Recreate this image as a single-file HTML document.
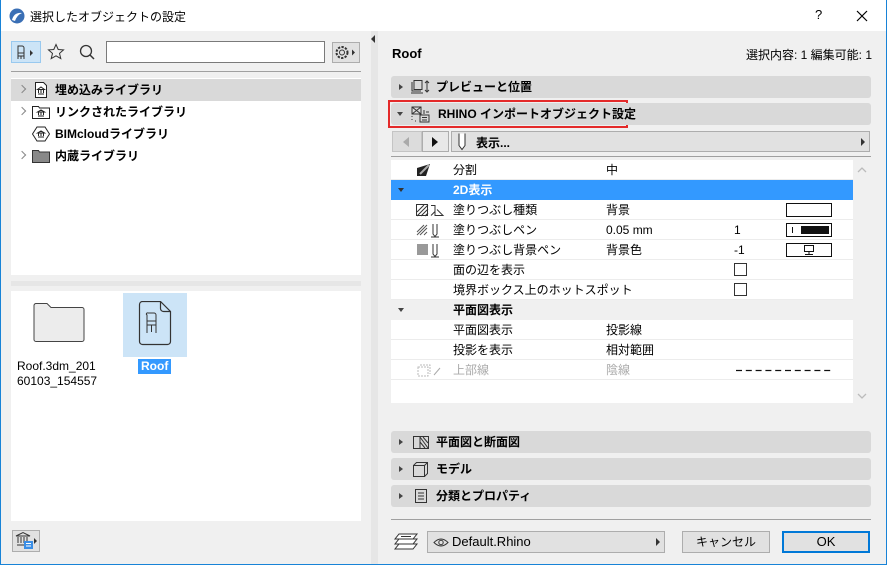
<!DOCTYPE html>
<html><head><meta charset="utf-8"><style>
*{box-sizing:border-box;margin:0;padding:0}
body{width:887px;height:565px;overflow:hidden;background:#f0f0f0;font-family:"Liberation Sans","Noto Sans CJK JP",sans-serif;font-size:12px;color:#000;position:relative}
.a{position:absolute}
.win{position:absolute;left:0;top:0;width:887px;height:565px;border:1px solid #1883d7;border-top:none}
.tb{left:0;top:0;width:887px;height:31px;background:#fff}
.row{position:absolute;left:0;height:22px;width:350px;font-weight:bold;line-height:22px}
.pan{position:absolute;left:391px;width:480px;height:22px;background:#d9d9d9;border-radius:3px;font-weight:bold;line-height:22px}
.tr{position:absolute;left:0;width:462px;height:20px;line-height:20px;border-bottom:1px solid #ececec}
.tri{position:absolute;left:8px;top:8px;width:0;height:0;border-left:4px solid #444;border-top:3.5px solid transparent;border-bottom:3.5px solid transparent}
.trd{position:absolute;left:6px;top:9px;width:0;height:0;border-top:4px solid #444;border-left:3.5px solid transparent;border-right:3.5px solid transparent}
.chev{position:absolute;left:8px;top:7px;width:6px;height:6px;border-right:1.5px solid #888;border-top:1.5px solid #888;transform:rotate(45deg)}
.btn{position:absolute;background:#e1e1e1;border:1px solid #adadad;text-align:center;line-height:20px}
</style></head><body>
<div class="a tb"></div>
<svg class="a" style="left:9px;top:8px" width="16" height="16"><circle cx="8" cy="8" r="7.5" fill="#3a6fb5"/><path d="M3 12 Q5 4 13 5 Q8 7 6 13Z" fill="#fff"/></svg>
<div class="a" style="left:30px;top:8px;font-size:12px">選択したオブジェクトの設定</div>
<div class="a" style="left:815px;top:7px;font-size:13px">?</div>
<svg class="a" style="left:856px;top:10px" width="12" height="12"><path d="M1 1L11 11M11 1L1 11" stroke="#000" stroke-width="1.2"/></svg>

<div class="a" style="left:11px;top:41px;width:30px;height:22px;background:#cce4f7;border:1px solid #99c9ef"></div>
<svg class="a" style="left:14px;top:44px" width="26" height="16"><path d="M4 2h4a2 2 0 0 1 2 2v5H4zM4 9v6M10 9v6M4 12h6M7 12v3" stroke="#333" fill="none"/><path d="M16 6l3 3-3 3z" fill="#333"/></svg>
<svg class="a" style="left:47px;top:43px" width="18" height="18"><path d="M9 1.5l2.2 5 5.3.4-4 3.5 1.3 5.2L9 12.8 4.2 15.6 5.5 10.4l-4-3.5 5.3-.4z" fill="none" stroke="#333"/></svg>
<svg class="a" style="left:78px;top:43px" width="18" height="18"><circle cx="8" cy="8" r="5.5" fill="none" stroke="#333" stroke-width="1.3"/><path d="M12 12l4 4" stroke="#333" stroke-width="1.5"/></svg>
<div class="a" style="left:106px;top:41px;width:219px;height:22px;background:#fff;border:1px solid #7a7a7a"></div>
<div class="a" style="left:332px;top:42px;width:28px;height:21px;background:#e1e1e1;border:1px solid #adadad"></div>
<svg class="a" style="left:334px;top:44px" width="26" height="17"><circle cx="8" cy="8.5" r="5.5" fill="none" stroke="#333" stroke-dasharray="2.3 1.3" stroke-width="2"/><circle cx="8" cy="8.5" r="2.5" fill="none" stroke="#333"/><path d="M18 5.5l3 3-3 3z" fill="#333"/></svg>
<div class="a" style="left:11px;top:71px;width:350px;height:1px;background:#a0a0a0"></div>

<div class="a" style="left:11px;top:78px;width:350px;height:197px;background:#fff">
 <div class="row" style="top:1px;background:#d9d9d9"><div class="chev"></div>
  <svg class="a" style="left:23px;top:3px" width="14" height="16"><path d="M1.5 .5h8l3 3v12h-11z" fill="#fff" stroke="#222"/><path d="M4 12h6M4.5 11V8M7 11V8M9.5 11V8M3.5 7.5L7 5l3.5 2.5z" stroke="#222" fill="none"/></svg>
  <span class="a" style="left:44px">埋め込みライブラリ</span></div>
 <div class="row" style="top:23px"><div class="chev"></div>
  <svg class="a" style="left:21px;top:4px" width="18" height="14"><path d="M.5 1.5h6l1 1.5h10v10.5H.5z" fill="#fff" stroke="#222"/><path d="M6 11h6M6.5 10V7.5M9 10V7.5M11.5 10V7.5M5.5 7L9 5l3.5 2z" stroke="#222" fill="none"/></svg>
  <span class="a" style="left:44px">リンクされたライブラリ</span></div>
 <div class="row" style="top:45px">
  <svg class="a" style="left:21px;top:3px" width="18" height="16"><path d="M5 1h8l4.5 7-4.5 7H5L.5 8z" fill="#fff" stroke="#222"/><path d="M6 11h6M6.5 10V7.5M9 10V7.5M11.5 10V7.5M5.5 7L9 5l3.5 2z" stroke="#222" fill="none"/></svg>
  <span class="a" style="left:44px">BIMcloudライブラリ</span></div>
 <div class="row" style="top:67px"><div class="chev"></div>
  <svg class="a" style="left:21px;top:4px" width="18" height="14"><path d="M.5 1.5h6l1 1.5h10v10.5H.5z" fill="#888" stroke="#333"/></svg>
  <span class="a" style="left:44px">内蔵ライブラリ</span></div>
</div>
<div class="a" style="left:11px;top:281px;width:350px;height:5px;background:#e6e6e6"></div>
<div class="a" style="left:11px;top:291px;width:350px;height:230px;background:#fff">
 <svg class="a" style="left:22px;top:12px" width="52" height="40"><path d="M1 2.5a2 2 0 0 1 2-2h11l4 4h31a2 2 0 0 1 2 2v30a2 2 0 0 1-2 2H3a2 2 0 0 1-2-2z" fill="#ececec" stroke="#444"/></svg>
 <div class="a" style="left:112px;top:2px;width:64px;height:64px;background:#cce4f7"></div>
 <svg class="a" style="left:127px;top:10px" width="34" height="48"><path d="M4.5 .5h18l10 10v30a3 3 0 0 1-3 3H4.5a3 3 0 0 1-3-3v-37a3 3 0 0 1 3-3z" fill="none" stroke="#333" stroke-width="1.2"/><path d="M22.5 .5v7a3 3 0 0 0 3 3h7" fill="none" stroke="#333" stroke-width="1.2"/><path d="M10 12h6a2 2 0 0 1 2 2v10h-9v-10a1 1 0 0 1 1-2zM9 24v8M18 24v8M13.5 24v7M9 20h9" fill="none" stroke="#333"/></svg>
 <div class="a" style="left:6px;top:68px;font-size:12px;line-height:15px">Roof.3dm_201<br>60103_154557</div>
 <div class="a" style="left:127px;top:68px;padding:0 3px;background:#3399ff;color:#fff;font-weight:bold;line-height:15px">Roof</div>
</div>
<div class="a" style="left:12px;top:530px;width:28px;height:22px;background:#e1e1e1;border:1px solid #adadad"></div>
<svg class="a" style="left:14px;top:531px" width="26" height="20"><path d="M3 14h12M4 12V6M7 12V6M10 12V6M13 12V6M2 5L9 1.5 16 5z" stroke="#333" fill="none"/><rect x="10" y="10" width="9" height="8" fill="#3a8ee6"/><path d="M12 12.5h5M12 15h5" stroke="#fff"/><path d="M20 7l3 3-3 3z" fill="#333"/></svg>

<div class="a" style="left:371px;top:31px;width:7px;height:533px;background:#e6e6e6"></div>
<div class="a" style="left:371px;top:35px;width:0;height:0;border-right:4px solid #333;border-top:4px solid transparent;border-bottom:4px solid transparent"></div>

<div class="a" style="left:392px;top:46px;font-weight:bold;font-size:13px">Roof</div>
<div class="a" style="right:15px;top:46px">選択内容: 1 編集可能: 1</div>

<div class="pan" style="top:76px"><div class="tri"></div>
 <svg class="a" style="left:20px;top:3px" width="20" height="16"><path d="M3 1.5h8v9H3zM1 3v9h9M0 14h12" stroke="#333" fill="none"/><path d="M16 2v11M14 4l2-2 2 2M14 11l2 2 2-2" stroke="#333" fill="none"/></svg>
 <span class="a" style="left:45px">プレビューと位置</span></div>
<div class="a" style="left:388px;top:100px;width:240px;height:28px;border:2px solid #e42a2a"></div>
<div class="pan" style="top:103px"><div class="trd"></div>
 <svg class="a" style="left:20px;top:3px" width="20" height="17"><path d="M1 1h9v7H1zM1 1l9 7M10 1L1 8" stroke="#333" fill="none"/><path d="M9 9h9v7H9zM11 11.5h5M11 14h5M13 4v4M15 6h3M1 10v1M1 13v1M4 15h1" stroke="#333" fill="none"/></svg>
 <span class="a" style="left:47px">RHINO インポートオブジェクト設定</span></div>

<div class="a" style="left:392px;top:131px;width:30px;height:21px;background:#dcdcdc;border:1px solid #c4c4c4"></div>
<div class="a" style="left:403px;top:137px;width:0;height:0;border-right:6px solid #aaa;border-top:5px solid transparent;border-bottom:5px solid transparent"></div>
<div class="a" style="left:422px;top:131px;width:27px;height:21px;background:#e8e8e8;border:1px solid #adadad"></div>
<div class="a" style="left:432px;top:137px;width:0;height:0;border-left:6px solid #111;border-top:5px solid transparent;border-bottom:5px solid transparent"></div>
<div class="a" style="left:451px;top:131px;width:419px;height:21px;background:#e1e1e1;border:1px solid #adadad"></div>
<svg class="a" style="left:457px;top:133px" width="10" height="18"><path d="M2 .5v12l3 4 3-4V.5" stroke="#333" fill="#fff"/></svg>
<div class="a" style="left:476px;top:134px;font-weight:bold">表示...</div>
<div class="a" style="left:861px;top:138px;width:0;height:0;border-left:4px solid #333;border-top:4px solid transparent;border-bottom:4px solid transparent"></div>
<div class="a" style="left:391px;top:156px;width:480px;height:1px;background:#a0a0a0"></div>

<div class="a" style="left:391px;top:160px;width:462px;height:243px;background:#fff;overflow:hidden">
 <div class="tr" style="top:0">
  <svg class="a" style="left:25px;top:3px" width="18" height="14"><path d="M1 5L14 1 10 13 1 13z" fill="#222"/><path d="M4 11l6-6 3-3" stroke="#aaa" stroke-width="2" fill="none"/></svg>
  <span class="a" style="left:62px">分割</span><span class="a" style="left:215px">中</span></div>
 <div class="tr" style="top:20px;background:#3399ff;color:#fff;font-weight:bold;border:none"><div class="trd" style="left:7px;top:8px;border-top-color:#333"></div><span class="a" style="left:62px">2D表示</span></div>
 <div class="tr" style="top:40px">
  <svg class="a" style="left:25px;top:4px" width="30" height="13"><rect x=".5" y=".5" width="11" height="11" fill="#fff" stroke="#333"/><path d="M1 8l7-7M1 12L12 1M5 12l7-7M9 12l3-3" stroke="#333"/><path d="M15 1.5h4v10h8l-6-6M15 11.5l4-4" stroke="#333" fill="none"/></svg>
  <span class="a" style="left:62px">塗りつぶし種類</span><span class="a" style="left:215px">背景</span>
  <div class="a" style="left:395px;top:3px;width:46px;height:14px;border:1px solid #111"></div></div>
 <div class="tr" style="top:60px">
  <svg class="a" style="left:25px;top:3px" width="30" height="15"><path d="M1 9l7-7M1 12l10-10M4 12l7-7M8 12l3-3" stroke="#555"/><path d="M17 1v10l2 2.5 2-2.5V1M15 14h8" stroke="#333" fill="none"/></svg>
  <span class="a" style="left:62px">塗りつぶしペン</span><span class="a" style="left:215px">0.05 mm</span><span class="a" style="left:343px">1</span>
  <div class="a" style="left:395px;top:3px;width:46px;height:14px;border:1px solid #111"><div class="a" style="left:5px;top:3px;width:1px;height:6px;background:#111"></div><div class="a" style="left:14px;top:2px;width:28px;height:8px;background:#111"></div></div></div>
 <div class="tr" style="top:80px">
  <svg class="a" style="left:25px;top:3px" width="30" height="15"><rect x="1" y="1" width="11" height="11" fill="#999"/><path d="M17 1v10l2 2.5 2-2.5V1M15 14h8" stroke="#333" fill="none"/></svg>
  <span class="a" style="left:62px">塗りつぶし背景ペン</span><span class="a" style="left:215px">背景色</span><span class="a" style="left:343px">-1</span>
  <div class="a" style="left:395px;top:3px;width:46px;height:14px;border:1px solid #111"><svg class="a" style="left:16px;top:1px" width="12" height="11"><rect x="1.5" y=".5" width="9" height="6" fill="none" stroke="#111"/><path d="M6 7v2M2 9.5h8" stroke="#111"/></svg></div></div>
 <div class="tr" style="top:100px"><span class="a" style="left:62px">面の辺を表示</span><div class="a" style="left:343px;top:3px;width:13px;height:13px;border:1px solid #333"></div></div>
 <div class="tr" style="top:120px"><span class="a" style="left:62px">境界ボックス上のホットスポット</span><div class="a" style="left:343px;top:3px;width:13px;height:13px;border:1px solid #333"></div></div>
 <div class="tr" style="top:140px;background:#f0f0f0;font-weight:bold;border:none"><div class="trd" style="left:7px;top:8px"></div><span class="a" style="left:62px">平面図表示</span></div>
 <div class="tr" style="top:160px"><span class="a" style="left:62px">平面図表示</span><span class="a" style="left:215px">投影線</span></div>
 <div class="tr" style="top:180px"><span class="a" style="left:62px">投影を表示</span><span class="a" style="left:215px">相対範囲</span></div>
 <div class="tr" style="top:200px;color:#aaa">
  <svg class="a" style="left:25px;top:3px" width="30" height="15"><path d="M2 4h10v9H2zM4 2h10v9" stroke="#bbb" fill="none" stroke-dasharray="2 1"/><path d="M18 12l6-7" stroke="#aaa"/></svg>
  <span class="a" style="left:62px">上部線</span><span class="a" style="left:215px">陰線</span>
  <svg class="a" style="left:345px;top:9px" width="98" height="3"><path d="M0 1.5H97" stroke="#111" stroke-width="1.2" stroke-dasharray="6 3.8"/></svg></div>
</div>
<div class="a" style="left:853px;top:160px;width:18px;height:243px;background:#f0f0f0"></div>
<svg class="a" style="left:857px;top:166px" width="10" height="8"><path d="M1 6l4-4 4 4" stroke="#bbb" fill="none" stroke-width="1.3"/></svg>
<svg class="a" style="left:857px;top:392px" width="10" height="8"><path d="M1 2l4 4 4-4" stroke="#bbb" fill="none" stroke-width="1.3"/></svg>

<div class="pan" style="top:431px"><div class="tri"></div>
 <svg class="a" style="left:21px;top:3px" width="18" height="16"><rect x="1.5" y="2.5" width="15" height="12" fill="none" stroke="#333"/><path d="M8 3l8 11M8 8l5 6M11 3l5 6M8 2v13" stroke="#333" fill="none"/></svg>
 <span class="a" style="left:45px">平面図と断面図</span></div>
<div class="pan" style="top:458px"><div class="tri"></div>
 <svg class="a" style="left:21px;top:3px" width="18" height="17"><path d="M1.5 4.5h11v11h-11zM1.5 4.5l3-3h11v11l-3 3M12.5 4.5l3-3" stroke="#333" fill="none"/></svg>
 <span class="a" style="left:45px">モデル</span></div>
<div class="pan" style="top:485px"><div class="tri"></div>
 <svg class="a" style="left:23px;top:3px" width="14" height="16"><rect x="1.5" y="1.5" width="11" height="13" fill="none" stroke="#333"/><path d="M4 5h6M4 8h6M4 11h6" stroke="#333"/></svg>
 <span class="a" style="left:45px">分類とプロパティ</span></div>

<div class="a" style="left:391px;top:519px;width:480px;height:1px;background:#a0a0a0"></div>
<svg class="a" style="left:393px;top:533px" width="26" height="18"><path d="M6 1h18l-4 5H2zM6 6h18l-4 5H2zM6 11h18l-4 5H2z" fill="#fff" stroke="#333"/><path d="M8 3.5h10" stroke="#333"/></svg>
<div class="btn" style="left:427px;top:531px;width:238px;height:22px;text-align:left">
 <svg class="a" style="left:5px;top:5px" width="16" height="11"><path d="M1 5.5Q8 -1.5 15 5.5Q8 12.5 1 5.5z" fill="none" stroke="#333"/><circle cx="8" cy="5.5" r="2.2" fill="none" stroke="#333"/></svg>
 <span class="a" style="left:24px;top:0;font-size:13px">Default.Rhino</span>
 <div class="a" style="left:228px;top:6px;width:0;height:0;border-left:4px solid #333;border-top:4px solid transparent;border-bottom:4px solid transparent"></div></div>
<div class="btn" style="left:682px;top:531px;width:88px;height:22px">キャンセル</div>
<div class="btn" style="left:782px;top:531px;width:88px;height:22px;border:2px solid #0078d7;line-height:18px;font-size:13px">OK</div>
<div class="win"></div>
</body></html>
